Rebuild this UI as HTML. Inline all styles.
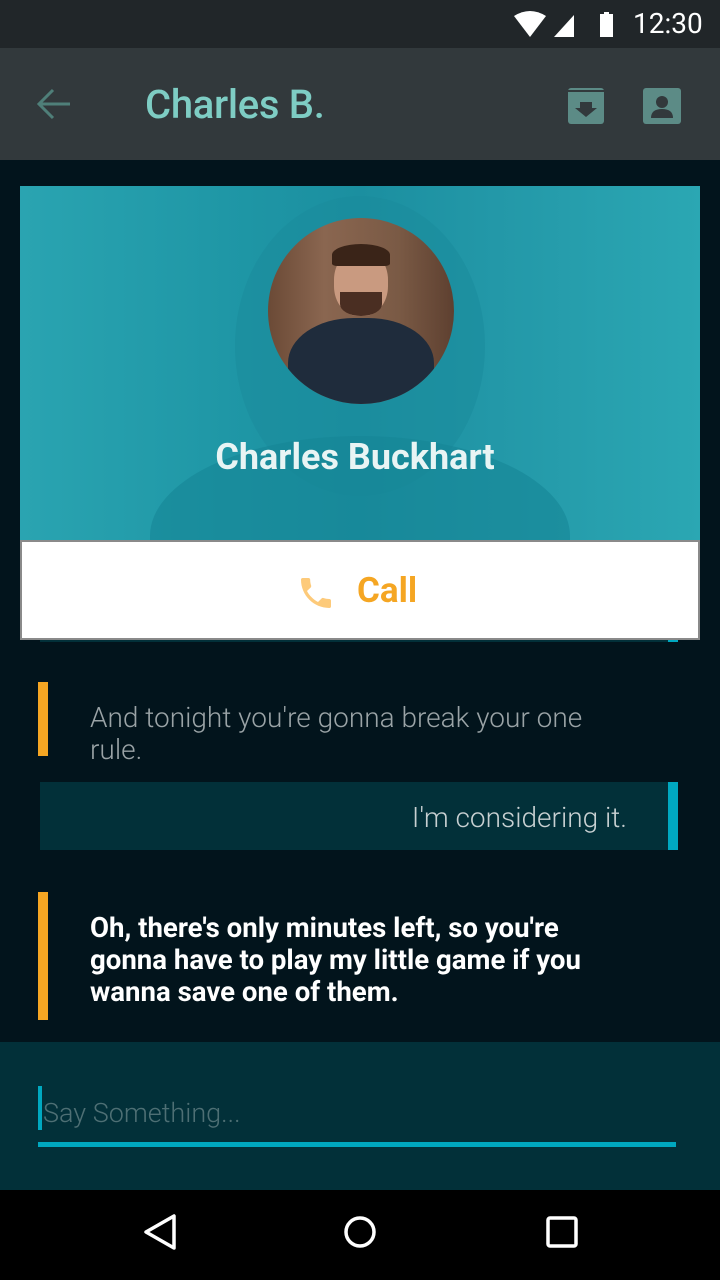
<!DOCTYPE html>
<html><head><meta charset="utf-8"><style>
*{margin:0;padding:0;box-sizing:border-box}
body{width:720px;height:1280px;background:#02141c;font-family:"Roboto","Liberation Sans",sans-serif;position:relative;overflow:hidden}
.abs{position:absolute}
</style></head><body>
<div class="abs" style="left:0;top:0;width:720px;height:48px;background:#212629"></div>
<svg class="abs" style="left:512px;top:10px" width="110" height="30" viewBox="0 0 110 30">
<path d="M2 6 Q18 -4 34 6 L18 27 Z" fill="#fff"/>
<path d="M42 27 L62 5 L62 27 Z" fill="#fff"/>
<rect x="88" y="4" width="13" height="23" fill="#fff"/><rect x="92" y="2" width="5" height="3" fill="#fff"/>
</svg>
<div class="abs" style="left:633px;top:7px;color:#fff;font-size:28px">12:30</div>
<div class="abs" style="left:0;top:48px;width:720px;height:112px;background:#32393c"></div>
<svg class="abs" style="left:36px;top:87px" width="36" height="34" viewBox="0 0 36 34"><path d="M34 17 H4 M17 3 L3 17 L17 31" stroke="#4f7f79" stroke-width="3" fill="none"/></svg>
<div class="abs" style="left:145px;top:81px;color:#7ecdc4;font-size:40px;font-weight:500;letter-spacing:-0.3px">Charles B.</div>
<svg class="abs" style="left:568px;top:88px" width="36" height="36" viewBox="0 0 36 36"><rect x="0" y="0" width="36" height="36" rx="3" fill="#5c8b86"/><rect x="0" y="2" width="36" height="2" fill="#32393c"/><path d="M12 14 h12 v6 h5 l-11 9 l-11 -9 h5z" fill="#32393c"/></svg>
<svg class="abs" style="left:643px;top:88px" width="38" height="36" viewBox="0 0 38 36"><rect width="38" height="36" rx="3" fill="#5c8b86"/><circle cx="19" cy="14" r="6" fill="#32393c"/><path d="M8 30 Q8 21 19 21 Q30 21 30 30Z" fill="#32393c"/></svg>
<div class="abs" style="left:20px;top:186px;width:680px;height:355px;background:linear-gradient(90deg,#2aa4b1,#1f97a6 30%,#1b8fa0 50%,#2398a8 70%,#2ba7b3);overflow:hidden">
<div class="abs" style="left:215px;top:10px;width:250px;height:300px;border-radius:50%;background:#1a8c9c;opacity:.6"></div>
<div class="abs" style="left:130px;top:250px;width:420px;height:200px;border-radius:50% 50% 0 0;background:#168596;opacity:.6"></div>
</div>
<div class="abs" style="left:268px;top:218px;width:186px;height:186px;border-radius:50%;overflow:hidden;background:linear-gradient(90deg,#6b4a36,#8a6650 30%,#7a5a45 70%,#5e4030)">
<div class="abs" style="left:66px;top:32px;width:54px;height:66px;border-radius:45%;background:#c99a80"></div>
<div class="abs" style="left:64px;top:26px;width:58px;height:22px;border-radius:50% 50% 10% 10%;background:#3a2418"></div>
<div class="abs" style="left:72px;top:74px;width:42px;height:24px;border-radius:0 0 50% 50%;background:#4a2e22"></div>
<div class="abs" style="left:20px;top:100px;width:146px;height:100px;border-radius:45% 45% 0 0;background:#1f2c3c"></div>
</div>
<div class="abs" style="left:0;top:436px;width:710px;text-align:center;color:#e8f4f4;font-size:36px;font-weight:bold">Charles Buckhart</div>
<div class="abs" style="left:40px;top:638px;width:638px;height:4px;background:#023039;border-right:10px solid #00a8c0"></div>
<div class="abs" style="left:20px;top:540px;width:680px;height:100px;background:#fff;border:2px solid #8a8a8a"></div>
<svg class="abs" style="left:296px;top:573px" width="40" height="40" viewBox="0 0 24 24"><path d="M6.6 10.8c1.4 2.8 3.8 5.1 6.6 6.6l2.2-2.2c.3-.3.7-.4 1-.2 1.1.4 2.3.6 3.6.6.6 0 1 .4 1 1V20c0 .6-.4 1-1 1C10.6 21 3 13.4 3 4c0-.6.4-1 1-1h3.5c.6 0 1 .4 1 1 0 1.3.2 2.5.6 3.6.1.3 0 .7-.2 1L6.6 10.8z" fill="#fdca7a"/></svg>
<div class="abs" style="left:357px;top:570px;color:#f5a623;font-size:35px;font-weight:bold">Call</div>
<div class="abs" style="left:38px;top:682px;width:10px;height:74px;background:#f5a623"></div>
<div class="abs" style="left:90px;top:702px;width:520px;color:#9aa3a6;font-size:28px;font-weight:300;line-height:32px">And tonight you're gonna break your one rule.</div>
<div class="abs" style="left:40px;top:782px;width:638px;height:68px;background:#023039;border-right:10px solid #00a8c0"></div>
<div class="abs" style="left:40px;top:801px;width:587px;text-align:right;color:#c8d0d2;font-size:28px;font-weight:300">I'm considering it.</div>
<div class="abs" style="left:38px;top:892px;width:10px;height:128px;background:#f5a623"></div>
<div class="abs" style="left:90px;top:912px;width:540px;color:#fff;font-size:27.6px;font-weight:bold;line-height:32px">Oh, there's only minutes left, so you're gonna have to play my little game if you wanna save one of them.</div>
<div class="abs" style="left:0;top:1042px;width:720px;height:148px;background:#023039"></div>
<div class="abs" style="left:38px;top:1086px;width:4px;height:44px;background:#00a8c0"></div>
<div class="abs" style="left:43px;top:1097px;color:#4e6f74;font-size:27px;font-weight:300">Say Something...</div>
<div class="abs" style="left:38px;top:1142px;width:638px;height:5px;background:#00a8c0"></div>
<div class="abs" style="left:0;top:1190px;width:720px;height:90px;background:#000"></div>
<svg class="abs" style="left:140px;top:1212px" width="40" height="40" viewBox="0 0 40 40"><path d="M34 4 L34 36 L6 20 Z" stroke="#fff" stroke-width="3.5" fill="none" stroke-linejoin="round"/></svg>
<svg class="abs" style="left:340px;top:1212px" width="40" height="40" viewBox="0 0 40 40"><circle cx="20" cy="20" r="14" stroke="#fff" stroke-width="3.5" fill="none"/></svg>
<svg class="abs" style="left:542px;top:1212px" width="40" height="40" viewBox="0 0 40 40"><rect x="6" y="6" width="28" height="28" rx="2" stroke="#fff" stroke-width="3.5" fill="none"/></svg>
</body></html>
